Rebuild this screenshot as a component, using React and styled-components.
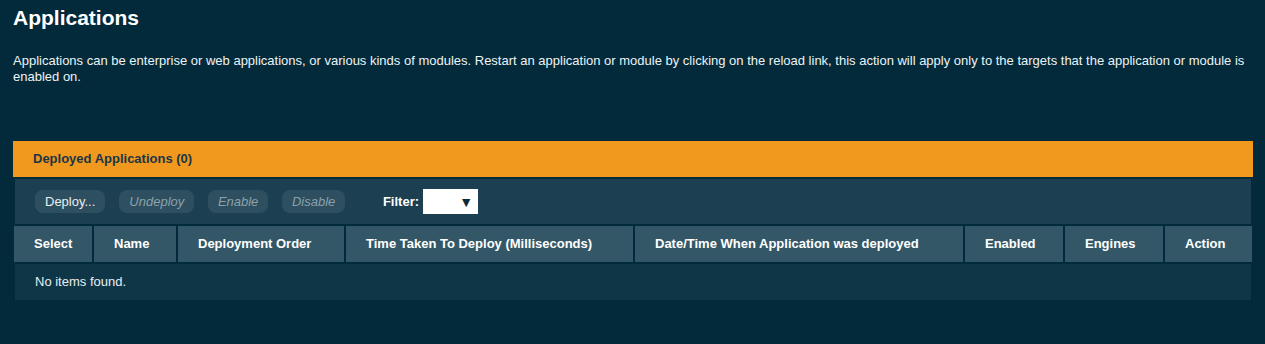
import React from "react";
import styled, { createGlobalStyle } from "styled-components";

const GlobalStyle = createGlobalStyle`
   html, body {
      margin: 0;
      padding: 0;
      background: #022a3b;
   }
   body {
      font-family: "Liberation Sans", Arial, sans-serif;
      font-size: 13px;
      color: #eef3f5;
   }
`;

const Page = styled.div`
   padding: 0 12px 0 13px;
   min-height: 344px;
   box-sizing: border-box;
`;
const Title = styled.h1`
   margin: 6px 0 0;
   font-size: 21px;
   line-height: 24px;
   font-weight: bold;
   color: #ffffff;
`;
const Description = styled.p`
   margin: 23px 0 0;
   line-height: 16px;
   color: #eef3f5;
`;
const Panel = styled.div`
   margin-top: 56px;
   width: 1240px;
`;
const PanelTitle = styled.div`
   height: 36px;
   line-height: 36px;
   padding-left: 20px;
   background: #f0991e;
   color: #1b3545;
   font-weight: bold;
`;
const Toolbar = styled.div`
   margin: 2px 2px 0;
   height: 45px;
   padding: 11px 0 0 20px;
   box-sizing: border-box;
   background: #1c4052;
   display: flex;
   align-items: flex-start;
   gap: 14px;
`;
const ToolButton = styled.div`
   height: 23px;
   line-height: 23px;
   padding: ${(p) => (p.disabled ? "0 9.6px 0 10px" : "0 10px")};
   border-radius: 8px;
   background: #2e4f5f;
   color: ${(p) => (p.disabled ? "#8ba1ab" : "#e8eef1")};
   font-style: ${(p) => (p.disabled ? "italic" : "normal")};
`;
const FilterGroup = styled.div`
   margin-left: 24px;
   margin-top: -1px;
   display: flex;
   align-items: center;
   gap: 4px;
`;
const FilterLabel = styled.span`
   font-weight: bold;
   color: #ffffff;
`;
const FilterSelect = styled.div`
   width: 55px;
   height: 25px;
   background: #ffffff;
   color: #0d2a38;
   box-sizing: border-box;
   display: flex;
   align-items: center;
   justify-content: flex-end;
   padding-right: 5px;
   font-size: 14px;
`;
const HeaderRow = styled.div`
   margin: 2px 1px 0;
   display: grid;
   grid-template-columns: 78px 82px 166px 287px 328px 98px 98px 87px;
   gap: 2px;
`;
const HeaderCell = styled.div`
   height: 36px;
   line-height: 36px;
   padding-left: 20px;
   background: #335767;
   color: #ffffff;
   font-weight: bold;
   white-space: nowrap;
`;
const EmptyRow = styled.div`
   margin: 2px 2px 0;
   height: 36px;
   line-height: 36px;
   padding-left: 20px;
   background: #0f3647;
   color: #e8eef1;
`;

const columns = [
   "Select",
   "Name",
   "Deployment Order",
   "Time Taken To Deploy (Milliseconds)",
   "Date/Time When Application was deployed",
   "Enabled",
   "Engines",
   "Action",
];

export default function App() {
   return (
      <>
         <GlobalStyle />
         <Page>
            <Title>Applications</Title>
            <Description>
               Applications can be enterprise or web applications, or various kinds of modules. Restart an
               application or module by clicking on the reload link, this action will apply only to the targets
               that the application or module is enabled on.
            </Description>
            <Panel>
               <PanelTitle>Deployed Applications (0)</PanelTitle>
               <Toolbar>
                  <ToolButton>Deploy...</ToolButton>
                  <ToolButton disabled>Undeploy</ToolButton>
                  <ToolButton disabled>Enable</ToolButton>
                  <ToolButton disabled>Disable</ToolButton>
                  <FilterGroup>
                     <FilterLabel>Filter:</FilterLabel>
                     <FilterSelect>▼</FilterSelect>
                  </FilterGroup>
               </Toolbar>
               <HeaderRow>
                  {columns.map((c) => (
                     <HeaderCell key={c}>{c}</HeaderCell>
                  ))}
               </HeaderRow>
               <EmptyRow>No items found.</EmptyRow>
            </Panel>
         </Page>
      </>
   );
}
